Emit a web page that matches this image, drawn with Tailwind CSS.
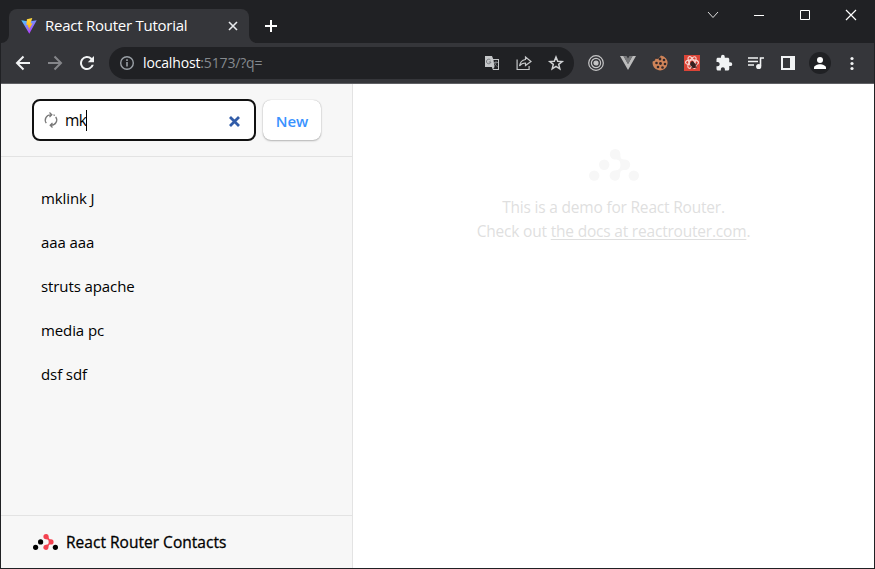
<!DOCTYPE html>
<html lang="en">
<head>
<meta charset="utf-8">
<title>React Router Tutorial</title>
<script src="https://cdn.jsdelivr.net/npm/@tailwindcss/browser@4"></script>
</head>
<body class="w-[875px] h-[569px] overflow-hidden bg-[#202124] font-['Open_Sans','Noto_Sans',sans-serif]">
<svg class="hidden">
  <symbol id="router" viewBox="0 0 25 16">
    <g class="fill-current"><circle cx="2.6" cy="13.3" r="2.6"/><circle cx="7.6" cy="7.9" r="2.6"/><circle cx="22.4" cy="13.3" r="2.6"/></g>
    <path d="M13 0a2.6 2.6 0 0 1 2.7 2.8C15.7 5 16.3 5.300 18 5.300a2.600 2.600 0 0 1 0 5.200C16 10.500 15.600 11 15.500 13.300A2.600 2.600 0 1 1 12.800 10.700C15 10.600 15.700 10 15.700 7.900S15 5.300 13 5.200A2.600 2.600 0 0 1 13 0Z" fill="var(--accent)"/>
  </symbol>
</svg>
<div class="flex flex-col h-full border-x border-b border-[#202124]">
  <header class="h-[43px] shrink-0 flex bg-[#202124] text-white">
    <div class="relative mt-[9px] ml-2 w-[240px] h-[34px] rounded-t-lg bg-[#35363a] flex items-center">
      <svg class="absolute -left-2 bottom-0" width="8" height="8"><path d="M8 0A8 8 0 0 1 0 8H8Z" fill="#35363a"/></svg>
      <svg class="absolute -right-2 bottom-0" width="8" height="8"><path d="M0 0A8 8 0 0 0 8 8H0Z" fill="#35363a"/></svg>
      <svg class="ml-3 w-4 h-4" viewBox="0 0 16 16">
        <defs><linearGradient id="v" x2=".6" y2="1"><stop stop-color="#41d1ff"/><stop offset="1" stop-color="#bd34fe"/></linearGradient><linearGradient id="b" x2="0" y2="1"><stop stop-color="#ffdd45"/><stop offset="1" stop-color="#ffa800"/></linearGradient></defs>
        <path d="M.3 2.200 8 3.400l7.700-1.200L8.300 15.700Z" fill="url(#v)"/><path d="m11.300.1-5.400 1.100-.5 6 1.800-.3-.5 2.500 1.500-.4-.7 3.600 4-7.400-2 .3Z" fill="url(#b)"/>
      </svg>
      <span class="ml-2 pb-0.5 w-[180px] text-[15px] tracking-[-0.25px] leading-5 whitespace-nowrap">React Router Tutorial</span>
      <svg class="w-4 h-4" viewBox="0 0 16 16" stroke="#e8eaed" stroke-width="1.600"><path d="m4 4 8 8m0-8-8 8"/></svg>
    </div>
    <svg class="ml-[14px] mt-[18px] w-4 h-4" viewBox="0 0 16 16" stroke="#fff" stroke-width="2"><path d="M8 2v12M2 8h12"/></svg>
    <div class="ml-auto flex h-[30px] items-center">
      <svg class="w-[46px] h-[30px]" viewBox="0 0 46 30" fill="none" stroke="#ddd"><path d="m18 12 5 5.500 5-5.500"/></svg>
      <svg class="w-[46px] h-[30px]" viewBox="0 0 46 30" stroke="#fff"><path d="M18 15.500h10"/></svg>
      <svg class="w-[46px] h-[30px]" viewBox="0 0 46 30" fill="none" stroke="#fff"><path d="M18.500 10.500h9v9h-9Z"/></svg>
      <svg class="w-[46px] h-[30px]" viewBox="0 0 46 30" stroke="#fff" stroke-width="1.200"><path d="m18 10 10 10m0-10-10 10"/></svg>
    </div>
  </header>
  <nav class="h-[41px] shrink-0 flex items-center bg-[#35363a] border-b border-[#5f6064] px-1.5">
    <svg class="w-8 h-5" viewBox="-6 0 32 20" fill="none" stroke="#f1f3f4" stroke-width="2"><path d="M17 10H4m6.500-6.500L4 10l6.500 6.500"/></svg>
    <svg class="w-8 h-5" viewBox="-6 0 32 20" fill="none" stroke="#85868a" stroke-width="2"><path d="M3 10h13M9.500 3.500 16 10l-6.500 6.500"/></svg>
    <svg class="w-8 h-5" viewBox="-6 0 32 20"><path d="M14.950 5.050A7 7 0 1 0 16.800 11.800h-2.100A5 5 0 1 1 13.500 6.500L10.800 9.200H17V3Z" fill="#f1f3f4"/></svg>
    <div class="ml-1.5 w-[465px] h-8 rounded-full bg-[#202124] flex items-center pl-[10px]">
      <svg class="w-4 h-4" viewBox="0 0 16 16" fill="none" stroke="#9aa0a6" stroke-width="1.400"><circle cx="8" cy="8" r="6.300"/><path d="M8 7v4.500M8 4.300v1.700" stroke-width="1.600"/></svg>
      <span class="ml-2 w-[333px] text-[14px] tracking-[-0.15px] leading-5 text-[#85898e]"><span class="text-white">localhost</span>:5173/?q=</span>
      <svg class="w-8 h-4" viewBox="-8 0 32 16"><path d="M1 1h7l1.200 3H15v11H9L7.800 12H1Z" fill="#c5c7c9"/><path d="M9.500 5H14v9H9.200l1.300-2Z" fill="#202124"/><path d="M6.500 5A2.300 2.300 0 1 0 7 7H4.800M10 7.500h4M12 6v1.500c0 1.500-1 3-2 3.500m.5-3c.5 1.500 1.500 2.500 3 3.500" fill="none" stroke="#777a7e"/></svg>
      <svg class="w-8 h-4" viewBox="-8 0 32 16" fill="none" stroke="#c5c7c9" stroke-width="1.200"><path d="M1.100 4.500v10h12V11M9.500 2l5.500 4.500-5.500 4V8C7 8 5 8.800 3.500 11 4 7.300 6.200 5 9.500 4.500Z"/></svg>
      <svg class="w-8 h-4" viewBox="-8 0 32 16" fill="none" stroke="#d0d2d4" stroke-width="1.500"><path d="m8 2 1.700 4.200 4.500.3-3.500 2.900 1.100 4.400L8 11.400l-3.800 2.400 1.100-4.400-3.500-2.900 4.500-.3Z"/></svg>
    </div>
    <div class="ml-1.5 flex items-center">
      <svg class="w-8 h-4" viewBox="-8 0 32 16" fill="none" stroke="#c6c6c7" stroke-width="1.200"><circle cx="8" cy="8" r="7.300"/><circle cx="8" cy="8" r="4.600"/><circle cx="8" cy="8" r="2" fill="#c6c6c7"/></svg>
      <svg class="w-8 h-4" viewBox="-8 0 32 16"><path d="M0 1h3.500L8 9l4.500-8H16L8 15Z" fill="#bcbcbc"/><path d="M3.500 1h3L8 3.500 9.500 1h3L8 9Z" fill="#77787a"/></svg>
      <svg class="w-8 h-4" viewBox="-8 0 32 16"><path d="M9 .5a7.500 7.500 0 1 1-8.300 6L3 5.500l.5-2 2.500.500Z" fill="#cf8459"/><g fill="#33292a"><circle cx="8" cy="4" r="1.400"/><circle cx="12" cy="5" r="1.300"/><circle cx="4.500" cy="8" r="1.300"/><circle cx="8.500" cy="8.500" r="1.400"/><circle cx="13" cy="9" r="1.300"/><circle cx="6" cy="12" r="1.300"/><circle cx="10.500" cy="12.500" r="1.300"/><circle cx="4" cy="3" r=".8"/></g></svg>
      <svg class="w-8 h-4" viewBox="-8 0 32 16"><path d="M0 0h16v16H0Z" fill="#db4437"/><g fill="none" stroke="#f8d7d2" stroke-width="1.100"><ellipse cx="8" cy="7.500" rx="6.500" ry="2.600"/><ellipse cx="8" cy="7.500" rx="6.500" ry="2.600" transform="rotate(60 8 7.500)"/><ellipse cx="8" cy="7.500" rx="6.500" ry="2.600" transform="rotate(120 8 7.500)"/></g><ellipse cx="9.300" cy="9.500" rx="2.300" ry="3.400" transform="rotate(-35 9.500 10)" fill="#35201f"/><path d="m6 10 7-1M7 13l6-1M8 6l1 3" stroke="#35201f"/></svg>
      <svg class="w-8 h-[18px]" viewBox="-9.300 0 42.600 24" fill="#f1f3f4"><path d="M20.500 11H19V7c0-1.100-.9-2-2-2h-4V3.500a2.500 2.500 0 0 0-5 0V5H4c-1.100 0-1.990.9-1.990 2v3.800H3.500c1.490 0 2.700 1.210 2.700 2.700s-1.210 2.700-2.700 2.700H2V20c0 1.100.9 2 2 2h3.800v-1.500c0-1.490 1.210-2.700 2.700-2.700s2.700 1.210 2.700 2.700V22H17c1.100 0 2-.9 2-2v-4h1.500a2.500 2.500 0 0 0 0-5Z"/></svg>
      <svg class="w-8 h-4" viewBox="-8 0 32 16" fill="none" stroke="#f1f3f4" stroke-width="1.600"><path d="M0 3h10M0 6.500h10M0 10h6M16 3h-3.500v8"/><circle cx="10.700" cy="11.500" r="1.800" fill="#f1f3f4"/></svg>
      <svg class="w-8 h-4" viewBox="-8 0 32 16"><path d="M1 1h14v14H1Zm2 2v10h7V3Z" fill="#f1f3f4" fill-rule="evenodd"/></svg>
      <svg class="w-8 h-[22px]" viewBox="-5 0 32 22"><circle cx="11" cy="11" r="11" fill="#202124"/><circle cx="11" cy="8" r="3" fill="#fff"/><path d="M5 17v-1.500c0-2 3.500-3.300 6-3.300s6 1.300 6 3.300V17Z" fill="#fff"/></svg>
      <svg class="w-8 h-4" viewBox="-8 0 32 16" fill="#f1f3f4"><circle cx="8" cy="3.500" r="1.600"/><circle cx="8" cy="8.500" r="1.600"/><circle cx="8" cy="13.500" r="1.600"/></svg>
    </div>
  </nav>
  <div class="flex-1 flex min-h-0">
    <aside class="w-[352px] shrink-0 flex flex-col bg-[#f7f7f7] border-r border-[#e3e3e3] text-black">
      <div class="h-[73px] shrink-0 flex items-start pt-[15px] pl-[31px] border-b border-[#e3e3e3]">
        <div class="w-[224px] h-[42px] rounded-lg border-2 border-[#111] bg-white flex items-center pl-[9px]">
          <svg class="w-4 h-4" viewBox="0 0 16 16" fill="none" stroke="#777" stroke-width="1.300"><path d="M3.300 11.200A5.300 5.300 0 0 1 7.800 2.800h1M6.500.5l2.300 2.300-2.300 2.300M12.700 4.800A5.300 5.300 0 0 1 8.200 13.200h-1M9.500 10.900l-2.300 2.300 2.300 2.300M10.500 2.700l1.300.8"/></svg>
          <span class="ml-[6px] text-[15.5px] tracking-[-0.6px] leading-6">mk</span><span class="w-px h-[21px] bg-black"></span>
          <svg class="ml-auto mr-[14px] mt-0.5 w-[11px] h-[11px]" viewBox="0 0 11 11" stroke="#315ca8" stroke-width="2.800"><path d="m1 1 9 9m0-9-9 9"/></svg>
        </div>
        <button class="ml-[7px] mt-px w-[58px] h-10 pt-0.5 rounded-lg bg-white text-[#3992ff] font-semibold text-[15px] shadow-[0_0_1px_rgba(0,0,0,0.3),0_1px_2px_rgba(0,0,0,0.25)]">New</button>
      </div>
      <ul class="flex-1 pt-[19px] pl-10 text-[15px] tracking-[-0.1px]">
        <li class="h-11 flex items-center">mklink J</li>
        <li class="h-11 flex items-center">aaa aaa</li>
        <li class="h-11 flex items-center">struts apache</li>
        <li class="h-11 flex items-center">media pc</li>
        <li class="h-11 flex items-center">dsf sdf</li>
      </ul>
      <div class="h-[53px] shrink-0 border-t border-[#e3e3e3] flex items-center pl-8 [--accent:#f44250]">
        <svg class="w-[25px] h-4"><use href="#router"/></svg>
        <h1 class="ml-2 pt-0.5 text-[15.5px] tracking-[0.02px] [-webkit-text-stroke:0.3px_#000]">React Router Contacts</h1>
      </div>
    </aside>
    <main class="flex-1 bg-white flex flex-col items-center pt-[65px] text-[#dfdfdf] text-[15.5px] leading-6 text-center">
      <svg class="w-[50px] h-8 text-[#f7f7f7] [--accent:#f7f7f7]"><use href="#router"/></svg>
      <p class="mt-[14px] whitespace-nowrap tracking-[-0.2px]">This is a demo for React Router.<br>Check out <a class="underline underline-offset-2 decoration-1">the docs at reactrouter.com</a>.</p>
    </main>
  </div>
</div>
</body>
</html>
